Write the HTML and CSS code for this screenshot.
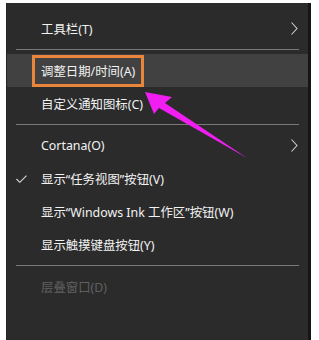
FILE: index.html
```html
<!DOCTYPE html>
<html lang="zh-CN">
<head>
<meta charset="utf-8">
<link rel="stylesheet" href="styles.css">
</head>
<body>
<div class="page">
  <div class="menu">
    <div class="item">
      <span class="slot"></span><span class="label">工具栏(T)</span>
      <svg class="chev" width="7" height="13" viewBox="0 0 7 13"><polyline points="0.5,0.5 6,6.5 0.5,12.5" fill="none" stroke="#cfcfcf" stroke-width="1.1"/></svg>
    </div>
    <div class="sep"></div>
    <div class="item hover">
      <span class="slot"></span><span class="label boxed">调整日期/时间(A)</span>
    </div>
    <div class="item">
      <span class="slot"></span><span class="label">自定义通知图标(C)</span>
    </div>
    <div class="sep"></div>
    <div class="item">
      <span class="slot"></span><span class="label">Cortana(O)</span>
      <svg class="chev" width="7" height="13" viewBox="0 0 7 13"><polyline points="0.5,0.5 6,6.5 0.5,12.5" fill="none" stroke="#cfcfcf" stroke-width="1.1"/></svg>
    </div>
    <div class="item">
      <span class="slot"><svg width="11" height="8" viewBox="0 0 11 8"><polyline points="0.5,4 3.8,7.3 10.5,0.6" fill="none" stroke="#d8d8d8" stroke-width="1.1"/></svg></span><span class="label">显示“任务视图”按钮(V)</span>
    </div>
    <div class="item">
      <span class="slot"></span><span class="label">显示“Windows Ink 工作区”按钮(W)</span>
    </div>
    <div class="item">
      <span class="slot"></span><span class="label">显示触摸键盘按钮(Y)</span>
    </div>
    <div class="sep"></div>
    <div class="item disabled">
      <span class="slot"></span><span class="label">层叠窗口(D)</span>
    </div>
  </div>
  <svg class="arrow" width="319" height="340" viewBox="0 0 319 340">
    <polygon points="145,92 172,97 165,103 247,158 159,108 154,114" fill="#f01ef0"/>
  </svg>
</div>
</body>
</html>
```
FILE: styles.css
```css
html, body {
  margin: 0;
  padding: 0;
  background: #ffffff;
}
.page {
  position: relative;
  width: 319px;
  height: 340px;
  padding: 3px 8px 0 6px;
  box-sizing: border-box;
  overflow: hidden;
}
.menu {
  height: 337px;
  background: #2b2b2b;
  border-left: 1px solid #242424;
  border-right: 3px solid #151515;
  box-sizing: border-box;
  padding-top: 9px;
  font-family: "Noto Sans", "Noto Sans CJK SC", sans-serif;
  font-size: 12.4px;
  color: #f2f2f2;
}
.item {
  height: 33px;
  display: flex;
  align-items: center;
  padding: 0 10px 0 9px;
}
.slot {
  width: 25px;
  flex: none;
  display: flex;
  align-items: center;
  padding-top: 1px;
}
.label {
  white-space: nowrap;
}
.chev {
  margin-left: auto;
  display: block;
}
.hover {
  background: #414141;
}
.boxed {
  margin-left: -9px;
  height: 32px;
  box-sizing: border-box;
  border: 3px solid #e8873c;
  padding: 0 6px 0 6px;
  display: flex;
  align-items: center;
}
.disabled {
  color: #606060;
}
.sep {
  height: 1px;
  background: #787878;
  margin: 4px 9px 4px 9px;
}
.arrow {
  position: absolute;
  left: 0;
  top: 0;
}
```
